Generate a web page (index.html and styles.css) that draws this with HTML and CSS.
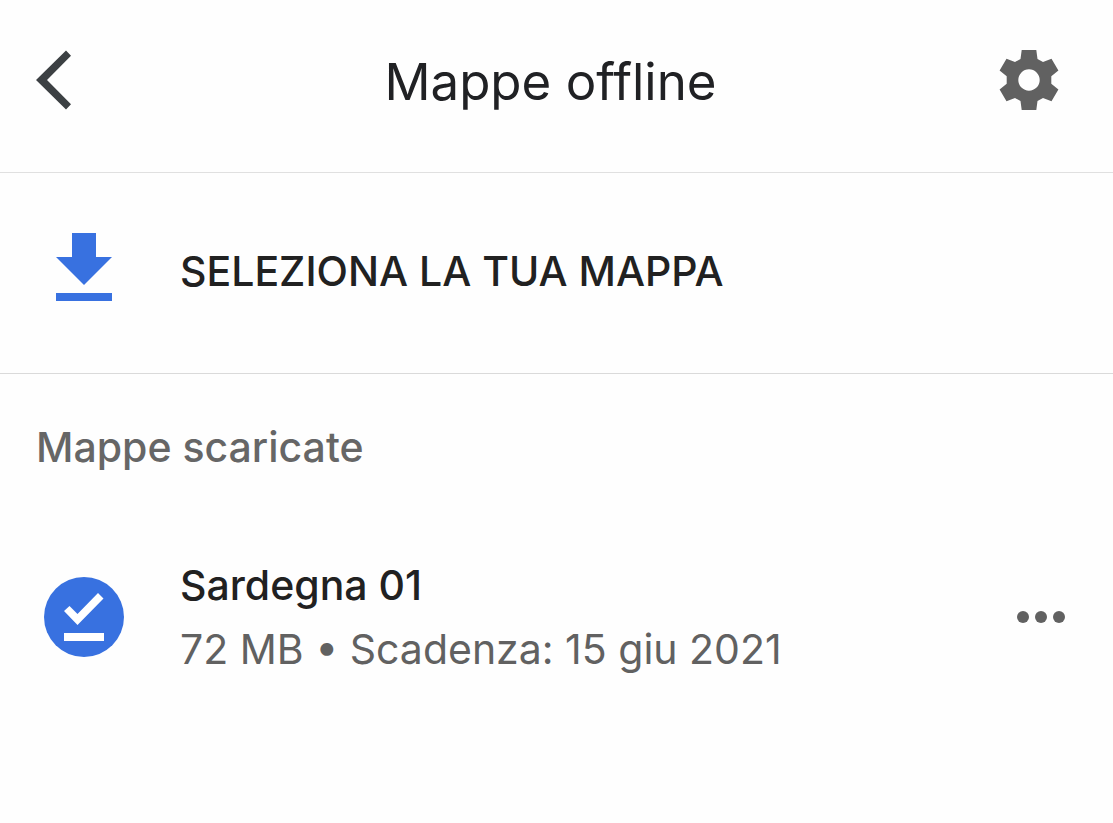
FILE: index.html
```html
<!DOCTYPE html>
<html lang="it">
<head>
<meta charset="utf-8">
<meta name="viewport" content="width=device-width, initial-scale=1">
<title>Mappe offline</title>
<link rel="stylesheet" href="styles.css">
</head>
<body>
<header class="topbar">
  <button class="icon-button back" type="button" aria-label="Indietro">
    <svg width="36" height="60" viewBox="0 0 36 60" aria-hidden="true"><path d="M30 .5L0 30l30 29.500 5-5.200L11 30 35 5.700z" fill="#3c4043"/></svg>
  </button>
  <h1 class="title">Mappe offline</h1>
  <button class="icon-button settings" type="button" aria-label="Impostazioni">
    <svg width="72" height="72" viewBox="-36 -36 72 72" aria-hidden="true"><path fill="#616161" fill-rule="evenodd" d="M-7.300-30H7.300L8.500-21 14-18 22.500-21.200 29.400-9.400 22.300-3.800V3.800L29.400 9.400 22.500 21.200 14 18 8.500 21 7.300 30H-7.300L-8.500 21-14 18-22.500 21.200-29.400 9.400-22.300 3.800V-3.800L-29.400-9.400-22.500-21.200-14-18-8.500-21zM0-10.700A10.700 10.700 0 1 0 0 10.700 10.700 10.700 0 1 0 0-10.700z"/></svg>
  </button>
</header>
<main>
  <button class="select-map" type="button">
    <svg class="lead-icon" width="96" height="96" viewBox="0 0 96 96" aria-hidden="true"><path fill="#3871e0" d="M36 14h24v24h16L48 66 20 38h16zM20 74h56v8H20z"/></svg>
    <span class="select-label">SELEZIONA LA TUA MAPPA</span>
  </button>
  <section class="downloads">
    <h2 class="section-title">Mappe scaricate</h2>
    <ul class="map-list">
      <li class="map-item">
        <svg class="lead-icon" width="96" height="96" viewBox="0 0 96 96" aria-hidden="true"><circle cx="48" cy="48" r="40" fill="#3871e0"/><path fill="#fff" d="M28 64h40v8H28zM28 42l5.500-5 8 8L62 24l5.500 5.500L41.500 56z"/></svg>
        <div class="map-text">
          <h3 class="map-name">Sardegna 01</h3>
          <p class="map-meta">72 MB • Scadenza: 15 giu 2021</p>
        </div>
        <button class="icon-button more" type="button" aria-label="Altre opzioni">
          <svg width="48" height="48" viewBox="0 0 48 48" fill="#616161" aria-hidden="true"><circle cx="6" cy="24" r="6"/><circle cx="24" cy="24" r="6"/><circle cx="42" cy="24" r="6"/></svg>
        </button>
      </li>
    </ul>
  </section>
</main>
</body>
</html>
```
FILE: styles.css
```css
* {
  box-sizing: border-box;
}

body {
  margin: 0;
  background: #fefefe;
  color: #202124;
  font-family: Inter, "Liberation Sans", sans-serif;
}

h1, h2, h3, p, ul {
  margin: 0;
  padding: 0;
  font-weight: 400;
}

ul {
  list-style: none;
}

svg {
  display: block;
}

.icon-button {
  padding: 0;
  border: 0;
  background: none;
  cursor: pointer;
}

.topbar {
  display: grid;
  grid-template-columns: 1fr auto 1fr;
  align-items: center;
  padding: 44px 48px 56px 36px;
  border-bottom: 1px solid #e0e0e0;
}

.back {
  justify-self: start;
}

.settings {
  justify-self: end;
}

.title {
  padding-top: 4px;
  font-size: 51px;
  line-height: 68px;
}

.select-map {
  display: flex;
  align-items: center;
  gap: 48px;
  width: 100%;
  padding: 46px 36px 58px;
  border: 0;
  border-bottom: 1px solid #dadada;
  background: none;
  color: #212121;
  font-family: inherit;
  font-size: 41px;
  font-weight: 500;
  line-height: 64px;
  text-align: left;
  cursor: pointer;
}

.select-label {
  padding-top: 8px;
}

.lead-icon {
  flex: none;
}

.downloads {
  padding: 48px 48px 48px 36px;
}

.section-title {
  color: #666;
  font-size: 41px;
  font-weight: 500;
  line-height: 51px;
}

.map-item {
  display: flex;
  align-items: center;
  gap: 48px;
  padding-top: 80px;
}

.map-text {
  flex: 1;
}

.map-name {
  color: #212121;
  font-size: 41px;
  font-weight: 500;
  line-height: 64px;
}

.map-meta {
  color: #616161;
  font-size: 41px;
  line-height: 64px;
}
```
